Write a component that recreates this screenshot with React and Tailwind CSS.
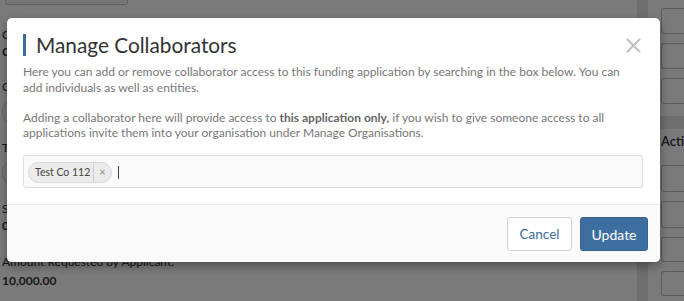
import React from "react";

const font = { fontFamily: "Lato, 'Open Sans', sans-serif" };

function PageBehind() {
  return (
    <div className="flex h-[301px] w-[684px] bg-white text-[#333]" style={font}>
      <div className="flex w-[637px] shrink-0 flex-col pl-[2px]">
        <div className="ml-[3px] h-[5px] w-[123px] rounded-b-[3px] border border-t-0 border-[#c8c8c8] bg-[#f7f7f7]" />
        <div className="mt-[22px] text-[12px] leading-[15px]">Contact Name:</div>
        <div className="mt-[2px] text-[12px] font-bold leading-[15px]">Company Ltd</div>
        <div className="mt-[20px] text-[12px] leading-[15px]">Contact Email:</div>
        <div className="mt-[4px] h-[28px] w-[200px] rounded-[14px] border border-[#ccc]" />
        <div className="mt-[14px] text-[12px] leading-[15px]">Total Cost:</div>
        <div className="mt-[4px] h-[28px] w-[200px] rounded-[14px] border border-[#ccc]" />
        <div className="mt-[14px] text-[12px] leading-[15px]">Start Date:</div>
        <div className="mt-[2px] text-[12px] font-bold leading-[15px]">01/01/2020</div>
        <div className="mt-[21px] text-[12px] leading-[15px]">Amount Requested by Applicant:</div>
        <div className="mt-[4px] text-[12px] font-bold leading-[15px]">10,000.00</div>
      </div>
      <div className="w-[11px] shrink-0 bg-[#e6e6e6]" />
      <div className="flex min-w-0 flex-1 flex-col overflow-hidden pl-[13px]">
        <div className="mt-[8px] flex flex-col gap-[9px]">
          <div className="h-[26px] rounded-l-[3px] border border-r-0 border-[#c4c4c4]" />
          <div className="h-[26px] rounded-l-[3px] border border-r-0 border-[#c4c4c4]" />
          <div className="h-[26px] rounded-l-[3px] border border-r-0 border-[#c4c4c4]" />
        </div>
        <div className="-ml-[13px] mt-[12px] h-[13px] bg-[#e6e6e6]" />
        <div className="mt-[4px] whitespace-nowrap text-[13px] font-semibold leading-[16px]">Actions</div>
        <div className="mt-[16px] flex flex-col gap-[9px]">
          <div className="h-[27px] rounded-l-[3px] border border-r-0 border-[#c4c4c4]" />
          <div className="h-[27px] rounded-l-[3px] border border-r-0 border-[#c4c4c4]" />
          <div className="h-[25px] rounded-l-[3px] border border-r-0 border-[#c4c4c4]" />
          <div className="h-[25px] rounded-l-[3px] border border-r-0 border-[#c4c4c4]" />
        </div>
      </div>
    </div>
  );
}

export default function App() {
  return (
    <div className="relative h-[301px] w-[684px] overflow-hidden">
      <PageBehind />
      <div className="absolute inset-0 bg-black/[0.52] pl-[7px] pt-[18px]" style={font}>
        <div className="w-[653px] rounded-[5px] bg-white shadow-[0_4px_10px_rgba(0,0,0,0.35)]">
          <div className="px-[16px] pt-[16px]">
            <div className="flex items-center">
              <div className="h-[22px] w-[3px] bg-[#3b6e9e]" />
              <h2 className="ml-[10px] text-[20.8px] leading-[22px] text-[#333]">Manage Collaborators</h2>
              <div className="ml-auto mr-[3px] flex h-[22px] items-center">
                <svg width="15" height="15" viewBox="0 0 15 15">
                  <path d="M1.5 1.5 L13.5 13.5 M13.5 1.5 L1.5 13.5" stroke="#c2c2c2" strokeWidth="2.2" strokeLinecap="round" />
                </svg>
              </div>
            </div>
            <p className="mt-[8px] pr-[4px] text-[12px] leading-[16px] text-[#777]">
              Here you can add or remove collaborator access to this funding application by searching in the box below. You can add individuals as well as entities.
            </p>
            <p className="mt-[14px] pr-[4px] text-[12px] leading-[15px] text-[#777]">
              Adding a collaborator here will provide access to <span className="font-bold text-[#666]">this application only,</span> if you wish to give someone access to all applications invite them into your organisation under Manage Organisations.
            </p>
            <div className="mt-[15px] mr-[1px] flex h-[33px] items-center rounded-[3px] border border-[#dcdcdc] bg-[#fafafa] pl-[4px] pt-[1px]">
              <div className="flex h-[21px] items-center rounded-full border border-[#dadada] bg-[#ebebeb] text-[10.5px] text-[#444]">
                <span className="pl-[6px] pr-[3px] leading-[14px]">Test Co 112</span>
                <span className="flex h-full items-center border-l border-[#d0d0d0] px-[5px] text-[11px] text-[#888]">×</span>
              </div>
              <div className="ml-[6px] h-[13px] w-px bg-[#444]" />
            </div>
          </div>
          <div className="mt-[16px] flex justify-end gap-[8px] rounded-b-[5px] border-t border-[#e8e8e8] bg-[#fafafa] pb-[11px] pr-[12px] pt-[12px]">
            <button className="h-[34px] w-[65px] rounded-[3px] border border-[#d2d2d2] bg-white text-[13.5px] text-[#3b6e9e]">Cancel</button>
            <button className="h-[34px] w-[68px] rounded-[3px] border border-[#35648f] bg-[#3c6f9f] text-[14px] text-white">Update</button>
          </div>
        </div>
      </div>
    </div>
  );
}
